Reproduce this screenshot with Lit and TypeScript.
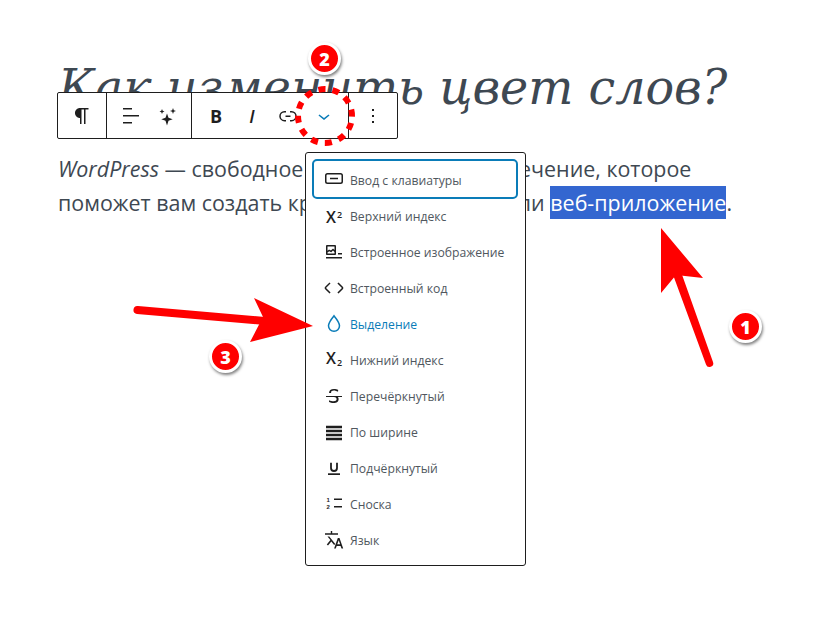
import { LitElement, html, css, svg } from 'lit';
import { customElement } from 'lit/decorators.js';

const ICONS: Record<string, unknown> = {
  paragraph: svg`<path d="m9.99609 14v-.2251l.00391.0001v6.225h1.5v-14.5h2.5v14.5h1.5v-14.5h3v-1.5h-8.50391c-2.76142 0-5 2.23858-5 5 0 2.7614 2.23858 5 5 5z"/>`,
  align: svg`<path d="M13 5.5H4V4h9v1.5Zm7 7H4V11h16v1.5Zm-7 7H4V18h9v1.5Z"/>`,
  sparkles: svg`<path d="M12 9.5l1.5 4.2 4.2 1.5-4.2 1.5L12 21.5l-1.5-4.8-4.2-1.5 4.2-1.5zM18 4l.8 2.2L21 7l-2.2.8L18 10l-.8-2.2L15 7l2.2-.8zM7 5l.7 1.8 1.8.7-1.8.7L7 10l-.7-1.8-1.8-.7 1.8-.7z"/>`,
  link: svg`<path d="M10 17.389H8.444A5.194 5.194 0 1 1 8.444 7H10v1.5H8.444a3.694 3.694 0 0 0 0 7.389H10v1.5ZM14 7h1.556a5.194 5.194 0 0 1 0 10.39H14v-1.5h1.556a3.694 3.694 0 0 0 0-7.39H14V7Zm-4.5 6h5v-1.5h-5V13Z"/>`,
  chevron: svg`<path d="M17.5 11.6L12 16l-5.5-4.4.9-1.2L12 14l4.5-3.6 1 1.2z"/>`,
  more: svg`<path d="M13 19h-2v-2h2v2zm0-6h-2v-2h2v2zm0-6h-2V5h2v2z"/>`,
  keyboard: svg`<path d="M5.5 6h13A2.5 2.5 0 0 1 21 8.5v6a2.5 2.5 0 0 1-2.5 2.5h-13A2.5 2.5 0 0 1 3 14.500v-6A2.500 2.500 0 0 1 5.500 6zm0 1.500a1 1 0 0 0-1 1v6a1 1 0 0 0 1 1h13a1 1 0 0 0 1-1v-6a1 1 0 0 0-1-1zM8 10.700h8v1.500H8z"/>`,
  image: svg`<path d="M4 18.500h16V17H4v1.500zM16 13v1.500h4V13h-4zM5.100 15h7.800c.6 0 1.100-.5 1.100-1.100V6.100c0-.6-.5-1.100-1.100-1.100H5.100C4.500 5 4 5.500 4 6.100v7.800c0 .6.500 1.100 1.100 1.100zm.4-8.500h7V10l-1-1c-.3-.3-.8-.3-1 0l-1.600 1.500-1.200-.7c-.3-.2-.6-.2-.9 0l-1.300 1V6.500zm0 6.100l1.800-1.300 1.300.8c.3.2.7.2.9-.1l1.500-1.400 1.500 1.400v1.500h-7v-.9z"/>`,
  code: svg`<path d="M20.800 10.700l-4.300-4.300-1.100 1.100 4.300 4.300c.1.1.1.3 0 .4l-4.300 4.300 1.100 1.100 4.300-4.300c.7-.8.7-1.900 0-2.600zM4.200 11.800l4.300-4.300-1-1-4.300 4.300c-.7.7-.7 1.800 0 2.500l4.300 4.300 1.100-1.100-4.300-4.300c-.2-.1-.2-.3-.1-.4z"/>`,
  drop: svg`<path d="M12 3.800c2.900 3.500 5.500 6.600 5.500 10a5.500 5.500 0 0 1-11 0c0-3.400 2.600-6.500 5.500-10z" fill="none" stroke="currentColor" stroke-width="1.500"/>`,
  strike: svg`<path d="M9.100 9v-.5c0-.6.2-1.100.7-1.400.5-.3 1.200-.5 2-.5.7 0 1.400.1 2.100.3.7.2 1.400.5 2.100.9l.2-1.900c-.6-.3-1.200-.5-1.900-.7-.8-.1-1.600-.2-2.400-.2-1.500 0-2.700.3-3.600 1-.8.7-1.200 1.500-1.200 2.600V9h2zM20 12H4v1h8.300c.3.1.6.2.8.3.5.2.9.5 1.100.8.3.3.4.7.4 1.200 0 .7-.2 1.100-.8 1.500-.5.3-1.200.5-2.100.5-.8 0-1.600-.1-2.400-.3-.8-.2-1.500-.5-2.200-.8L7 18.100c.5.2 1.200.4 2 .6.8.2 1.600.3 2.400.3 1.700 0 3-.3 3.900-1 .9-.7 1.300-1.600 1.300-2.800 0-.9-.2-1.700-.7-2.200H20v-1z"/>`,
  justify: svg`<path d="M4 5.800h16v2.400H4zM4 9.800h16v2.400H4zM4 13.800h16v2.400H4zM4 17.800h16v2.400H4z"/>`,
  underline: svg`<path d="M9 6.700V12a3 3 0 0 0 6 0V6.700" fill="none" stroke="currentColor" stroke-width="1.800"/><path d="M6 17.300h12V19H6z"/>`,
  footnote: svg`<path d="M12 6.500h8V8h-8zM12 14h8v1.500h-8z"/><text x="4.500" y="9.500" font-size="6" font-weight="700" font-family="Liberation Sans, sans-serif">1</text><text x="4.500" y="17" font-size="6" font-weight="700" font-family="Liberation Sans, sans-serif">2</text>`,
  language: svg`<path d="M17.500 10h-1.700l-3.700 10.500h1.700l.9-2.600h3.900l.9 2.600h1.700L17.500 10zm-2.200 6.300 1.400-4 1.400 4h-2.800zM3 5.200h13v1.500H3zM8.800 3h1.400v2.500H8.800zM5.500 8.500h1.800l6 7.500-1.200 1-2.800-3.500-3.300 4-1.200-1 3.600-4.400z"/>`,
};

const icon = (name: string) =>
  html`<svg class="icon" viewBox="0 0 24 24" width="24" height="24" fill="currentColor">${ICONS[name]}</svg>`;

const MENU = [
  { icon: 'keyboard', label: 'Ввод с клавиатуры', focused: true },
  { script: 'sup', label: 'Верхний индекс' },
  { icon: 'image', label: 'Встроенное изображение' },
  { icon: 'code', label: 'Встроенный код' },
  { icon: 'drop', label: 'Выделение', active: true },
  { script: 'sub', label: 'Нижний индекс' },
  { icon: 'strike', label: 'Перечёркнутый' },
  { icon: 'justify', label: 'По ширине' },
  { icon: 'underline', label: 'Подчёркнутый' },
  { icon: 'footnote', label: 'Сноска' },
  { icon: 'language', label: 'Язык' },
];

@customElement('app-root')
export class AppRoot extends LitElement {
  static styles = css`
    :host {
      display: block;
      position: relative;
      width: 815px;
      height: 621px;
      overflow: hidden;
      background: #fff;
      color: #3e4852;
      font-family: 'Open Sans', 'Noto Sans', sans-serif;
    }

    .post {
      display: flex;
      flex-direction: column;
      padding: 54px 0 0 58px;
      width: 700px;
    }

    h1 {
      margin: 0;
      width: 720px;
      font: italic 400 47.6px/68px 'DejaVu Serif', serif;
      white-space: nowrap;
    }

    p {
      margin: 30px 0 0;
      width: 690px;
      font-size: 21.43px;
      line-height: 34px;
    }

    .selected {
      padding: 2px 0;
      background: #3366d0;
      color: #fff;
      white-space: nowrap;
    }

    .toolbar {
      position: absolute;
      left: 57px;
      top: 92px;
      display: flex;
      height: 45px;
      background: #fff;
      border: 1px solid #1e1e1e;
      border-radius: 2px;
      color: #1e1e1e;
    }

    .group {
      display: flex;
      padding: 0 6px;
      border-right: 1px solid #1e1e1e;
    }

    .group:last-child { border-right: 0; }
    .group.single { padding: 0; width: 48px; justify-content: center; }

    .btn {
      display: flex;
      align-items: center;
      justify-content: center;
      width: 36px;
      font: 700 18px 'Open Sans', sans-serif;
    }

    .btn.italic { font-weight: 600; font-style: italic; }
    .btn.blue { color: #0a7cb8; }

    .menu {
      position: absolute;
      left: 305px;
      top: 152px;
      display: flex;
      flex-direction: column;
      box-sizing: border-box;
      width: 221px;
      height: 414px;
      padding: 9px 9px 7px 8px;
      background: #fff;
      border: 1px solid #1e1e1e;
      border-radius: 3px;
    }

    .item {
      flex: none;
      display: flex;
      align-items: center;
      gap: 4px;
      height: 36px;
      padding-left: 8px;
      font-size: 12.2px;
      color: #50575e;
      border-radius: 3px;
    }

    .item .glyph { color: #1e1e1e; }
    .item.active, .item.active .glyph { color: #0a7cb8; }

    .item.focused {
      margin: -1px 0 1px;
      outline: 2px solid #0a7cb8;
    }

    .item.focused .label { padding-top: 2px; }

    .glyph {
      flex: none;
      display: flex;
      align-items: center;
      justify-content: center;
      width: 24px;
      height: 24px;
    }

    .script {
      font: 600 16px 'Open Sans', sans-serif;
      line-height: 24px;
    }

    .script small { font-size: 9px; margin-left: 1px; }
    .script .up { vertical-align: 5px; }
    .script .down { vertical-align: -2px; }

    .marks {
      position: absolute;
      inset: 0;
      width: 815px;
      height: 621px;
      pointer-events: none;
    }

    .badge {
      position: absolute;
      display: flex;
      align-items: center;
      justify-content: center;
      box-sizing: border-box;
      width: 33px;
      height: 33px;
      border: 3px solid #fff;
      border-radius: 50%;
      background: #f00;
      box-shadow: 1px 2px 3px rgba(0, 0, 0, 0.5);
      color: #fff;
      font: 800 18px 'Open Sans', sans-serif;
    }

    .b1 { left: 729px; top: 310px; }
    .b2 { left: 308px; top: 42px; }
    .b3 { left: 209px; top: 340px; }
  `;

  render() {
    return html`
      <div class="post">
        <h1>Как изменить цвет слов?</h1>
        <p>
          <em>WordPress</em> — свободное программное обеспечение, которое
          поможет вам создать красивый сайт, блог или
          <span class="selected">веб-приложение</span>.
        </p>
      </div>

      <div class="toolbar">
        <div class="group single"><div class="btn">${icon('paragraph')}</div></div>
        <div class="group">
          <div class="btn">${icon('align')}</div>
          <div class="btn">${icon('sparkles')}</div>
        </div>
        <div class="group">
          <div class="btn">B</div>
          <div class="btn italic">I</div>
          <div class="btn">${icon('link')}</div>
          <div class="btn blue">${icon('chevron')}</div>
        </div>
        <div class="group single"><div class="btn">${icon('more')}</div></div>
      </div>

      <div class="menu">
        ${MENU.map(
          (m) => html`
            <div class="item ${m.focused ? 'focused' : ''} ${m.active ? 'active' : ''}">
              <span class="glyph">
                ${m.icon
                  ? icon(m.icon)
                  : html`<span class="script">X<small class=${m.script === 'sup' ? 'up' : 'down'}>2</small></span>`}
              </span>
              <span class="label">${m.label}</span>
            </div>
          `
        )}
      </div>

      <svg class="marks" viewBox="0 0 815 621">
        <g fill="#f00" stroke="none">
          <path d="M661 228 703 278 676 275 661 293z" />
          <path d="M672 272 680 269 713 362a3.500 3.500 0 0 1-7 2.500z" />
          <path d="M313 326 254 298 263 317 250 342z" />
          <path d="M138 306 265 317 265 325 137 314a4 4 0 0 1 1-8z" />
        </g>
        <circle cx="325" cy="116" r="27" fill="none" stroke="#f00" stroke-width="6" stroke-dasharray="7 7.137" transform="rotate(15 325 116)" />
      </svg>

      <div class="badge b1">1</div>
      <div class="badge b2">2</div>
      <div class="badge b3">3</div>
    `;
  }
}
